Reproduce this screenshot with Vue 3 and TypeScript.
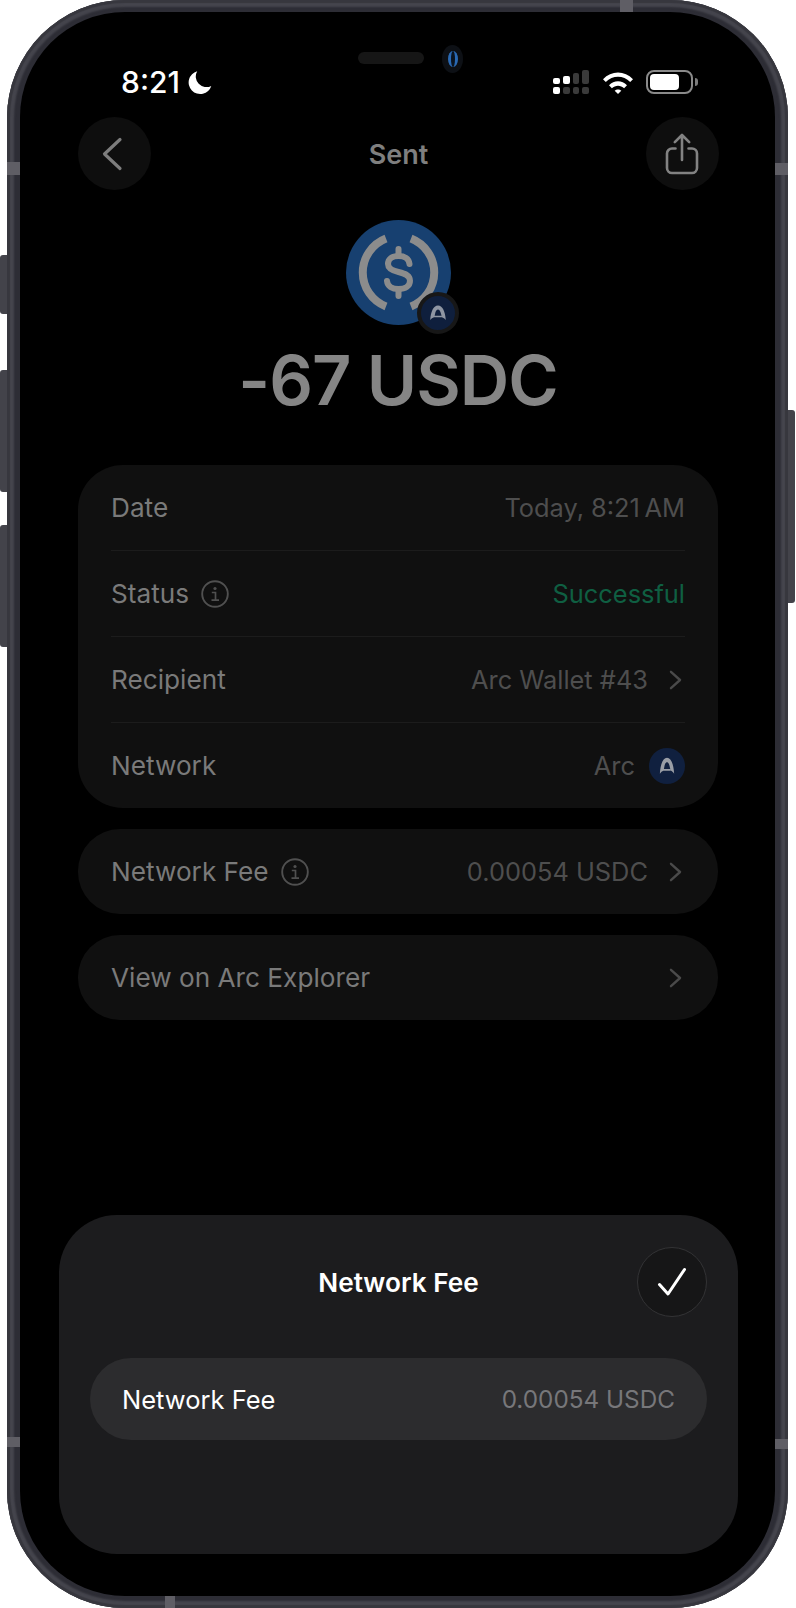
<script setup lang="ts">
interface DetailRow {
  label: string
  value: string
  info?: boolean
  chevron?: boolean
  network?: boolean
  success?: boolean
}

const detailRows: DetailRow[] = [
  { label: 'Date', value: 'Today, 8:21\u202fAM' },
  { label: 'Status', value: 'Successful', info: true, success: true },
  { label: 'Recipient', value: 'Arc Wallet #43', chevron: true },
  { label: 'Network', value: 'Arc', network: true }
]

const signalCols = [
  { height: 6, on: true },
  { height: 8, on: true },
  { height: 11, on: false },
  { height: 14, on: false }
]
</script>

<template>
  <div class="device">
    <span class="side-btn side-btn--mute"></span>
    <span class="side-btn side-btn--up"></span>
    <span class="side-btn side-btn--down"></span>
    <span class="side-btn side-btn--power"></span>
    <span class="band band--lt"></span>
    <span class="band band--rt"></span>
    <span class="band band--lb"></span>
    <span class="band band--rb"></span>
    <span class="band band--top"></span>
    <span class="band band--bottom"></span>

    <div class="screen">
      <span class="speaker"></span>
      <span class="camera"><i></i></span>

      <!-- status bar -->
      <div class="status">
        <div class="status__left">
          <span class="status__time">8:21</span>
          <svg class="moon" viewBox="0 0 24 24"><path d="M9.2 1.2A11.6 11.6 0 1 0 23.3 15.9 10.6 10.6 0 0 1 9.2 1.2Z" fill="#fff" /></svg>
        </div>
        <div class="status__right">
          <div class="signal">
            <div v-for="(col, i) in signalCols" :key="i" class="signal__col">
              <span :class="{ dim: !col.on }" :style="{ height: col.height + 'px' }"></span>
              <span :class="{ dim: i > 0 }" class="signal__dot"></span>
            </div>
          </div>
          <svg class="wifi" viewBox="0 0 32 23">
            <path d="M1 8.2C9.3-.6 22.7-.6 31 8.2l-2.8 2.9C21.4 4 10.6 4 3.8 11.1Z" fill="#fff" />
            <path d="M7 14.2c5-5.2 13-5.2 18 0l-2.9 3c-3.4-3.4-8.8-3.4-12.2 0Z" fill="#fff" />
            <path d="M12.7 19.8c1.8-1.8 4.8-1.8 6.6 0L16 23Z" fill="#fff" />
          </svg>
          <div class="battery"><span></span></div>
          <span class="battery-nub"></span>
        </div>
      </div>

      <!-- nav -->
      <div class="nav">
        <button class="round-btn">
          <svg class="back" width="22" height="34" viewBox="0 0 22 34"><path d="M19 2.5 3.5 17 19 31.5" fill="none" stroke="#7d7d7d" stroke-width="3.2" stroke-linecap="round" stroke-linejoin="round" /></svg>
        </button>
        <span class="nav__title">Sent</span>
        <button class="round-btn">
          <svg width="34" height="42" viewBox="0 0 34 42">
            <path d="M10.5 15.5H7a5 5 0 0 0-5 5V35a5 5 0 0 0 5 5h20a5 5 0 0 0 5-5V20.5a5 5 0 0 0-5-5h-3.500" fill="none" stroke="#828282" stroke-width="2.600" stroke-linecap="round" />
            <path d="M17 27V2.500M9.800 9.200 17 2l7.200 7.200" fill="none" stroke="#828282" stroke-width="2.600" stroke-linecap="round" stroke-linejoin="round" />
          </svg>
        </button>
      </div>

      <!-- token -->
      <div class="token">
        <svg width="105" height="105" viewBox="0 0 105 105">
          <circle cx="52.500" cy="52.500" r="52.500" fill="#174070" />
          <path d="M40 18.500A36.500 36.500 0 0 0 40 86.500M65 18.500A36.500 36.500 0 0 1 65 86.500" fill="none" stroke="#8c8c8c" stroke-width="8" />
          <path d="M63.500 44C63 38.500 58.500 36 52.500 36 46 36 42 39 42 44c0 4.500 3.800 6.500 10.500 8 7.500 1.700 11.500 3.800 11.500 8.800 0 5.200-4.500 8.200-11.500 8.200-6.500 0-11-2.800-11.500-8" fill="none" stroke="#8c8c8c" stroke-width="6" stroke-linecap="round" />
          <path d="M52.500 29v7M52.500 69v7" fill="none" stroke="#8c8c8c" stroke-width="6" stroke-linecap="round" />
        </svg>
        <span class="token__badge">
          <svg width="24" height="20" viewBox="0 0 20 20" preserveAspectRatio="none"><path d="M3.500 17C4 9 6 2.500 10 2.500S16 9 16.500 17c-1-1.500-2-2.300-3.200-2.800L12.200 9.500C11.700 7.500 10.800 6.500 10 6.500S8.300 7.500 7.800 9.500L7.200 12.800h5.700l.4 1.500H6.700C5.500 14.800 4.500 15.500 3.500 17Z" fill="#8f96a3" /></svg>
        </span>
      </div>
      <div class="amount">-67 USDC</div>

      <!-- details -->
      <div class="card">
        <div v-for="row in detailRows" :key="row.label" class="row">
          <div class="row__label">
            {{ row.label }}
            <svg v-if="row.info" class="info" viewBox="0 0 28 28">
              <circle cx="14" cy="14" r="12.800" fill="none" stroke="#505050" stroke-width="1.900" />
              <circle cx="14" cy="8.500" r="1.600" fill="#505050" />
              <path d="M10.800 12.500H14.500V20M10.500 20.200H18" fill="none" stroke="#505050" stroke-width="1.700" />
            </svg>
          </div>
          <div class="row__value" :class="{ 'row__value--success': row.success }">
            {{ row.value }}
            <svg v-if="row.chevron" class="chevron" viewBox="0 0 14 22"><path d="M2 2l10 9-10 9" fill="none" stroke="#4a4a4a" stroke-width="2.600" stroke-linecap="round" stroke-linejoin="round" /></svg>
            <span v-if="row.network" class="arc-icon">
              <svg width="22" height="22" viewBox="0 0 20 20"><path d="M3.500 17C4 9 6 2.500 10 2.500S16 9 16.500 17c-1-1.500-2-2.300-3.200-2.800L12.200 9.500C11.700 7.500 10.800 6.500 10 6.500S8.300 7.500 7.800 9.500L7.200 12.800h5.700l.4 1.500H6.700C5.500 14.800 4.500 15.500 3.500 17Z" fill="#9a9ea6" /></svg>
            </span>
          </div>
        </div>
      </div>

      <div class="card card--single">
        <div class="row">
          <div class="row__label">
            Network Fee
            <svg class="info" viewBox="0 0 28 28">
              <circle cx="14" cy="14" r="12.800" fill="none" stroke="#505050" stroke-width="1.900" />
              <circle cx="14" cy="8.500" r="1.600" fill="#505050" />
              <path d="M10.800 12.500H14.500V20M10.500 20.200H18" fill="none" stroke="#505050" stroke-width="1.700" />
            </svg>
          </div>
          <div class="row__value">
            0.00054 USDC
            <svg class="chevron" viewBox="0 0 14 22"><path d="M2 2l10 9-10 9" fill="none" stroke="#4a4a4a" stroke-width="2.600" stroke-linecap="round" stroke-linejoin="round" /></svg>
          </div>
        </div>
      </div>

      <div class="card card--single">
        <div class="row">
          <div class="row__label">View on Arc Explorer</div>
          <div class="row__value">
            <svg class="chevron" viewBox="0 0 14 22"><path d="M2 2l10 9-10 9" fill="none" stroke="#4a4a4a" stroke-width="2.600" stroke-linecap="round" stroke-linejoin="round" /></svg>
          </div>
        </div>
      </div>

      <!-- bottom sheet -->
      <div class="sheet">
        <div class="sheet__head">
          <span class="sheet__title">Network Fee</span>
          <button class="confirm">
            <svg width="32" height="32" viewBox="0 0 32 32"><path d="M3.500 18.500 12 28 28.500 3.500" fill="none" stroke="#fff" stroke-width="3" stroke-linecap="round" stroke-linejoin="round" /></svg>
          </button>
        </div>
        <div class="sheet__row">
          <span>Network Fee</span>
          <span class="sheet__value">0.00054 USDC</span>
        </div>
      </div>
    </div>
  </div>
</template>

<style scoped>
.device {
  position: relative;
  box-sizing: border-box;
  width: 781px;
  height: 1608px;
  margin-left: 7px;
  border-radius: 118px;
  background: #2d2d35;
  box-shadow: inset 0 0 1px 3px #37373e, inset 0 0 2px 7px #45454d;
  padding: 12px 13px;
  font-family: Inter, "Liberation Sans", sans-serif;
}

.side-btn {
  position: absolute;
  width: 7px;
  background: #43434a;
  border-radius: 3px 0 0 3px;
}
.side-btn--mute { left: -7px; top: 255px; height: 59px; }
.side-btn--up { left: -7px; top: 370px; height: 122px; }
.side-btn--down { left: -7px; top: 525px; height: 122px; }
.side-btn--power { right: -7px; top: 410px; height: 193px; border-radius: 0 3px 3px 0; }

.band {
  position: absolute;
  background: #5f5e65;
}
.band--lt { left: 0; top: 162px; width: 13px; height: 13px; }
.band--rt { right: 0; top: 163px; width: 13px; height: 12px; }
.band--lb { left: 0; top: 1437px; width: 13px; height: 10px; }
.band--rb { right: 0; top: 1439px; width: 13px; height: 10px; }
.band--top { left: 613px; top: 0; width: 13px; height: 12px; }
.band--bottom { left: 158px; bottom: 0; width: 10px; height: 12px; }

.screen {
  position: relative;
  display: flex;
  flex-direction: column;
  height: 100%;
  border-radius: 105px;
  background: #000;
  padding: 0 0 42px;
  box-sizing: border-box;
}

.speaker {
  position: absolute;
  left: 338px;
  top: 40px;
  width: 66px;
  height: 12px;
  border-radius: 6px;
  background: #161616;
}

.camera {
  position: absolute;
  left: 422px;
  top: 33px;
  width: 21px;
  height: 28px;
  border-radius: 50%;
  background: #0d1015;
  display: flex;
  align-items: center;
  justify-content: center;
}
.camera i {
  display: block;
  width: 10px;
  height: 16px;
  border-radius: 50%;
  background: #0a1420;
  border-left: 3px solid #2a69b3;
  border-right: 3px solid #2a69b3;
  box-sizing: border-box;
}

.status {
  display: flex;
  justify-content: space-between;
  align-items: center;
  height: 28px;
  margin-top: 56px;
  padding: 0 77px 0 101px;
}
.status__left {
  display: flex;
  align-items: center;
  gap: 8px;
}
.status__time {
  color: #fff;
  font-size: 30px;
  font-weight: 500;
  line-height: 28px;
}
.moon { width: 24px; height: 24px; }
.status__right {
  display: flex;
  align-items: center;
}
.signal {
  display: flex;
  align-items: flex-end;
  gap: 3px;
  width: 36px;
}
.signal__col {
  display: flex;
  flex-direction: column;
  gap: 3px;
  width: 7px;
}
.signal__col span {
  display: block;
  background: #fff;
  border-radius: 2px;
}
.signal__col span.dim { background: #3a3a3a; }
.signal__dot { height: 7px; }
.wifi { width: 32px; height: 23px; margin-left: 13px; }
.battery {
  box-sizing: border-box;
  width: 47px;
  height: 24px;
  margin-left: 12px;
  border: 2px solid #8a8a8a;
  border-radius: 8px;
  padding: 2px;
}
.battery span {
  display: block;
  width: 29px;
  height: 100%;
  border-radius: 4px;
  background: #fff;
}
.battery-nub {
  width: 3px;
  height: 8px;
  margin-left: 2px;
  border-radius: 0 3px 3px 0;
  background: #7c7c7c;
}

.nav {
  display: flex;
  justify-content: space-between;
  align-items: center;
  margin-top: 21px;
  padding: 0 56px 0 58px;
}
.nav__title {
  position: relative;
  top: 1px;
  color: #7f7f7f;
  font-size: 27px;
  font-weight: 600;
}
.round-btn {
  width: 73px;
  height: 73px;
  padding: 0;
  border: 0;
  border-radius: 50%;
  background: #0e0e0e;
  display: flex;
  align-items: center;
  justify-content: center;
}
.back { margin-right: 6px; }

.token {
  position: relative;
  align-self: center;
  width: 105px;
  height: 105px;
  margin: 30px 0 0 2px;
}
.token svg { display: block; }
.token__badge {
  position: absolute;
  left: 71px;
  top: 72px;
  box-sizing: border-box;
  width: 42px;
  height: 42px;
  border: 4px solid #171717;
  border-radius: 50%;
  background: #0f1f3d;
  display: flex;
  align-items: center;
  justify-content: center;
}

.amount {
  margin-top: 17px;
  padding-left: 1px;
  text-align: center;
  color: #858585;
  font-size: 68.500px;
  font-weight: 600;
  line-height: 78px;
  letter-spacing: -1px;
}

.card {
  margin: 45px 57px 0 58px;
  padding: 0 33px;
  border-radius: 45px;
  background: #101010;
}
.card--single {
  margin-top: 21px;
  border-radius: 42px;
}
.row {
  display: flex;
  justify-content: space-between;
  align-items: center;
  height: 85px;
  border-bottom: 1px solid #1c1c1c;
}
.row:last-child { border-bottom: 0; }
.row__label {
  display: flex;
  align-items: center;
  gap: 12px;
  color: #7a7a7a;
  font-size: 26.200px;
}
.row__value {
  display: flex;
  align-items: center;
  gap: 21px;
  color: #4e4e4e;
  font-size: 25.400px;
}
.row__value--success { color: #0f5f42; }
.info { width: 28px; height: 28px; }
.chevron { width: 13px; height: 20px; margin-right: 3px; }
.arc-icon {
  width: 36px;
  height: 36px;
  border-radius: 50%;
  background: #10203f;
  display: flex;
  align-items: center;
  justify-content: center;
  margin-left: -7px;
}

.sheet {
  box-sizing: border-box;
  height: 339px;
  margin: auto 37px 0 39px;
  padding: 32px 31px 0;
  border-radius: 58px;
  background: #1c1c1e;
}
.sheet__head {
  position: relative;
  display: flex;
  justify-content: center;
  align-items: center;
  height: 69px;
}
.sheet__title {
  position: relative;
  top: 1px;
  color: #fff;
  font-size: 26.200px;
  font-weight: 600;
}
.confirm {
  position: absolute;
  right: 0;
  top: 0;
  box-sizing: border-box;
  width: 70px;
  height: 70px;
  padding: 0;
  border: 1px solid #333335;
  border-radius: 50%;
  background: #161617;
  display: flex;
  align-items: center;
  justify-content: center;
}
.sheet__row {
  display: flex;
  justify-content: space-between;
  align-items: center;
  height: 82px;
  margin-top: 42px;
  padding: 0 32px;
  border-radius: 41px;
  background: #2c2c2e;
  color: #fff;
  font-size: 25.500px;
}
.sheet__value { color: #77777a; font-size: 24.300px; }
</style>

<style>
html, body { background: #fff; }
</style>
